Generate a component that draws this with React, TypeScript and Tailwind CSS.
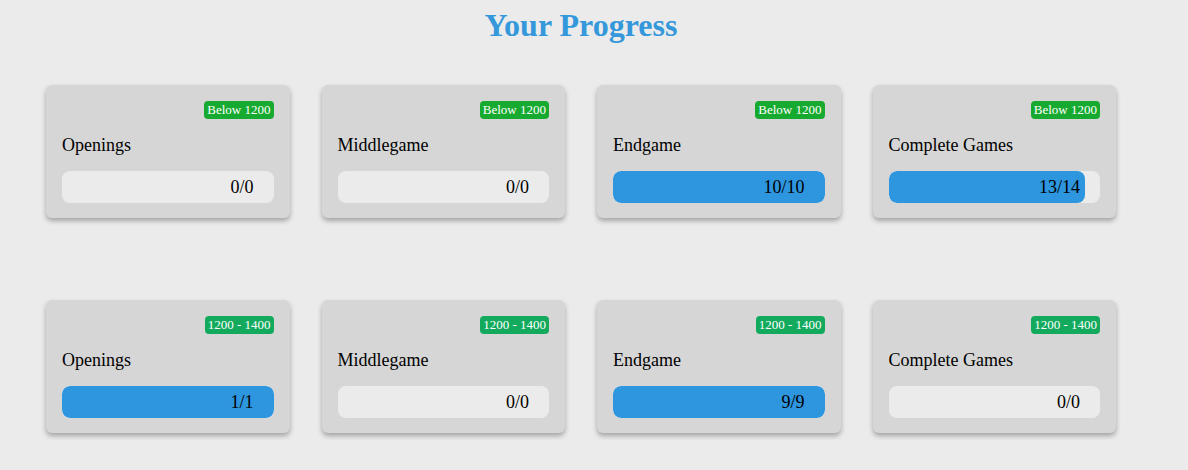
import React from "react";

type Item = { name: string; done: number; total: number };

const rows: { level: string; badge: string; items: Item[] }[] = [
  {
    level: "Below 1200",
    badge: "bg-[#17aa30]",
    items: [
      { name: "Openings", done: 0, total: 0 },
      { name: "Middlegame", done: 0, total: 0 },
      { name: "Endgame", done: 10, total: 10 },
      { name: "Complete Games", done: 13, total: 14 },
    ],
  },
  {
    level: "1200 - 1400",
    badge: "bg-[#13aa5e]",
    items: [
      { name: "Openings", done: 1, total: 1 },
      { name: "Middlegame", done: 0, total: 0 },
      { name: "Endgame", done: 9, total: 9 },
      { name: "Complete Games", done: 0, total: 0 },
    ],
  },
];

function ProgressCard({ item, level, badge }: { item: Item; level: string; badge: string }) {
  const pct = item.total ? (item.done / item.total) * 100 : 0;
  return (
    <div className="bg-[#d6d6d6] rounded-md shadow-[0_3px_5px_rgba(0,0,0,0.3)] px-4 pt-4 pb-[15px] flex flex-col">
      <div className="flex justify-end">
        <span className={`${badge} text-white text-[13px] leading-[18px] px-[3px] rounded-[4px]`}>
          {level}
        </span>
      </div>
      <p className="mt-4 text-[18px] leading-[20px] text-black">{item.name}</p>
      <div className="relative mt-4 h-8 rounded-lg bg-[#ebebeb] overflow-hidden">
        <div className="absolute inset-y-0 left-0 bg-[#2d96de] rounded-lg" style={{ width: `${pct}%` }} />
        <div className="relative h-full flex items-center justify-end pr-5 text-[18px] text-black">
          {item.done}/{item.total}
        </div>
      </div>
    </div>
  );
}

export default function App() {
  return (
    <div className="min-h-screen bg-[#ebebeb] font-['Liberation_Serif',serif]">
      <div className="w-[1070px] ml-[46px]">
        <h1 className="pt-[8px] text-center text-[32px] leading-[35px] font-bold text-[#3498db]">Your Progress</h1>
        <div className="mt-[42px] grid grid-cols-4 gap-x-8 gap-y-[82px]">
          {rows.map((row) =>
            row.items.map((item) => (
              <ProgressCard key={row.level + item.name} item={item} level={row.level} badge={row.badge} />
            ))
          )}
        </div>
      </div>
    </div>
  );
}
